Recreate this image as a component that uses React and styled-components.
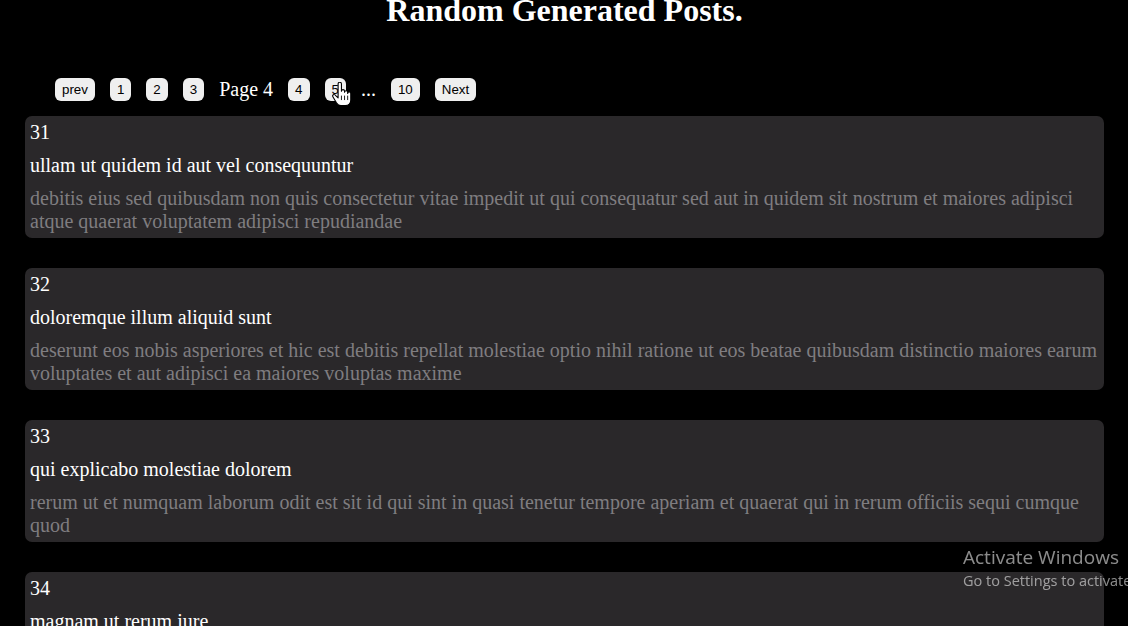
import React from 'react';
import styled, { createGlobalStyle } from 'styled-components';

const GlobalStyle = createGlobalStyle`
  html, body {
    margin: 0;
    padding: 0;
    background: #000;
    overflow: hidden;
  }
  body {
    font-family: "Liberation Serif", "Times New Roman", serif;
    font-size: 20px;
    color: #fff;
  }
`;

const Page = styled.div`
  padding: 0 24px 0 25px;
  height: 626px;
  overflow: hidden;
`;

const Title = styled.h1`
  margin: -8px 0 0;
  font-size: 32px;
  line-height: 37px;
  font-weight: bold;
  text-align: center;
`;

const Pager = styled.nav`
  position: relative;
  display: flex;
  align-items: center;
  gap: 15px;
  height: 23px;
  margin-top: 49px;
  padding-left: 30px;
`;

const PageButton = styled.button`
  border: none;
  border-radius: 6px;
  background: #efefef;
  color: #000;
  font-family: "Liberation Sans", Arial, sans-serif;
  font-size: 13.33px;
  line-height: 15px;
  padding: 4px 7px;
  cursor: pointer;
`;

const PagerText = styled.span`
  font-size: 20px;
  line-height: 23px;
  color: #fff;
`;

const Cursor = styled.svg`
  position: absolute;
  left: 307px;
  top: 4px;
  width: 20px;
  height: 25px;
`;

const PostList = styled.div`
  display: flex;
  flex-direction: column;
  gap: 30px;
  margin-top: 15px;
`;

const Card = styled.article`
  background: #2a282a;
  border-radius: 7px;
  padding: 5px;
  line-height: 23px;
`;

const PostId = styled.div`
  color: #fff;
`;

const PostTitle = styled.div`
  color: #fff;
  margin-top: 10px;
`;

const PostBody = styled.div`
  color: #7f7d80;
  margin-top: 10px;
`;

const Watermark = styled.div`
  position: fixed;
  left: 963px;
  top: 545px;
  font-family: "Open Sans", "Noto Sans", sans-serif;
  color: rgba(255, 255, 255, 0.55);
  white-space: nowrap;
  pointer-events: none;
`;

const WatermarkTitle = styled.div`
  font-size: 19px;
  line-height: 25px;
`;

const WatermarkSub = styled.div`
  font-size: 14.5px;
  line-height: 21px;
`;

const posts = [
  {
    id: 31,
    title: 'ullam ut quidem id aut vel consequuntur',
    body: 'debitis eius sed quibusdam non quis consectetur vitae impedit ut qui consequatur sed aut in quidem sit nostrum et maiores adipisci atque quaerat voluptatem adipisci repudiandae',
  },
  {
    id: 32,
    title: 'doloremque illum aliquid sunt',
    body: 'deserunt eos nobis asperiores et hic est debitis repellat molestiae optio nihil ratione ut eos beatae quibusdam distinctio maiores earum voluptates et aut adipisci ea maiores voluptas maxime',
  },
  {
    id: 33,
    title: 'qui explicabo molestiae dolorem',
    body: 'rerum ut et numquam laborum odit est sit id qui sint in quasi tenetur tempore aperiam et quaerat qui in rerum officiis sequi cumque quod',
  },
  {
    id: 34,
    title: 'magnam ut rerum iure',
    body: 'ea velit perferendis earum ut voluptatem voluptate itaque iusto totam pariatur in nemo voluptatem voluptatem autem magni tempora minima in est distinctio qui assumenda accusamus dignissimos officia nesciunt nobis',
  },
];

const App = () => {
  return (
    <>
      <GlobalStyle />
      <Page>
        <Title>Random Generated Posts.</Title>
        <Pager>
          <PageButton>prev</PageButton>
          <PageButton>1</PageButton>
          <PageButton>2</PageButton>
          <PageButton>3</PageButton>
          <PagerText>Page 4</PagerText>
          <PageButton>4</PageButton>
          <PageButton>5</PageButton>
          <PagerText>...</PagerText>
          <PageButton>10</PageButton>
          <PageButton>Next</PageButton>
          <Cursor viewBox="0 0 18 22">
            <path
              d="M5.5 1.5a1.5 1.5 0 0 1 3 0V8a1.4 1.4 0 0 1 2.8 0v1a1.4 1.4 0 0 1 2.8 0v1a1.4 1.4 0 0 1 2.8 0v6c0 3-2 5-5 5H8c-2 0-3-1-4-2.5L0.8 13c-0.6-1 0-2 1-2 0.7 0 1.3 0.5 1.8 1.2L5.5 14Z"
              fill="#fff"
              stroke="#000"
              strokeWidth="1"
              strokeLinejoin="round"
            />
            <path d="M8.5 12v4M11.3 12v4M14.1 12v4" stroke="#000" strokeWidth="0.8" />
          </Cursor>
        </Pager>
        <PostList>
          {posts.map((post) => (
            <Card key={post.id}>
              <PostId>{post.id}</PostId>
              <PostTitle>{post.title}</PostTitle>
              <PostBody>{post.body}</PostBody>
            </Card>
          ))}
        </PostList>
      </Page>
      <Watermark>
        <WatermarkTitle>Activate Windows</WatermarkTitle>
        <WatermarkSub>Go to Settings to activate Windows.</WatermarkSub>
      </Watermark>
    </>
  );
};

export default App;
